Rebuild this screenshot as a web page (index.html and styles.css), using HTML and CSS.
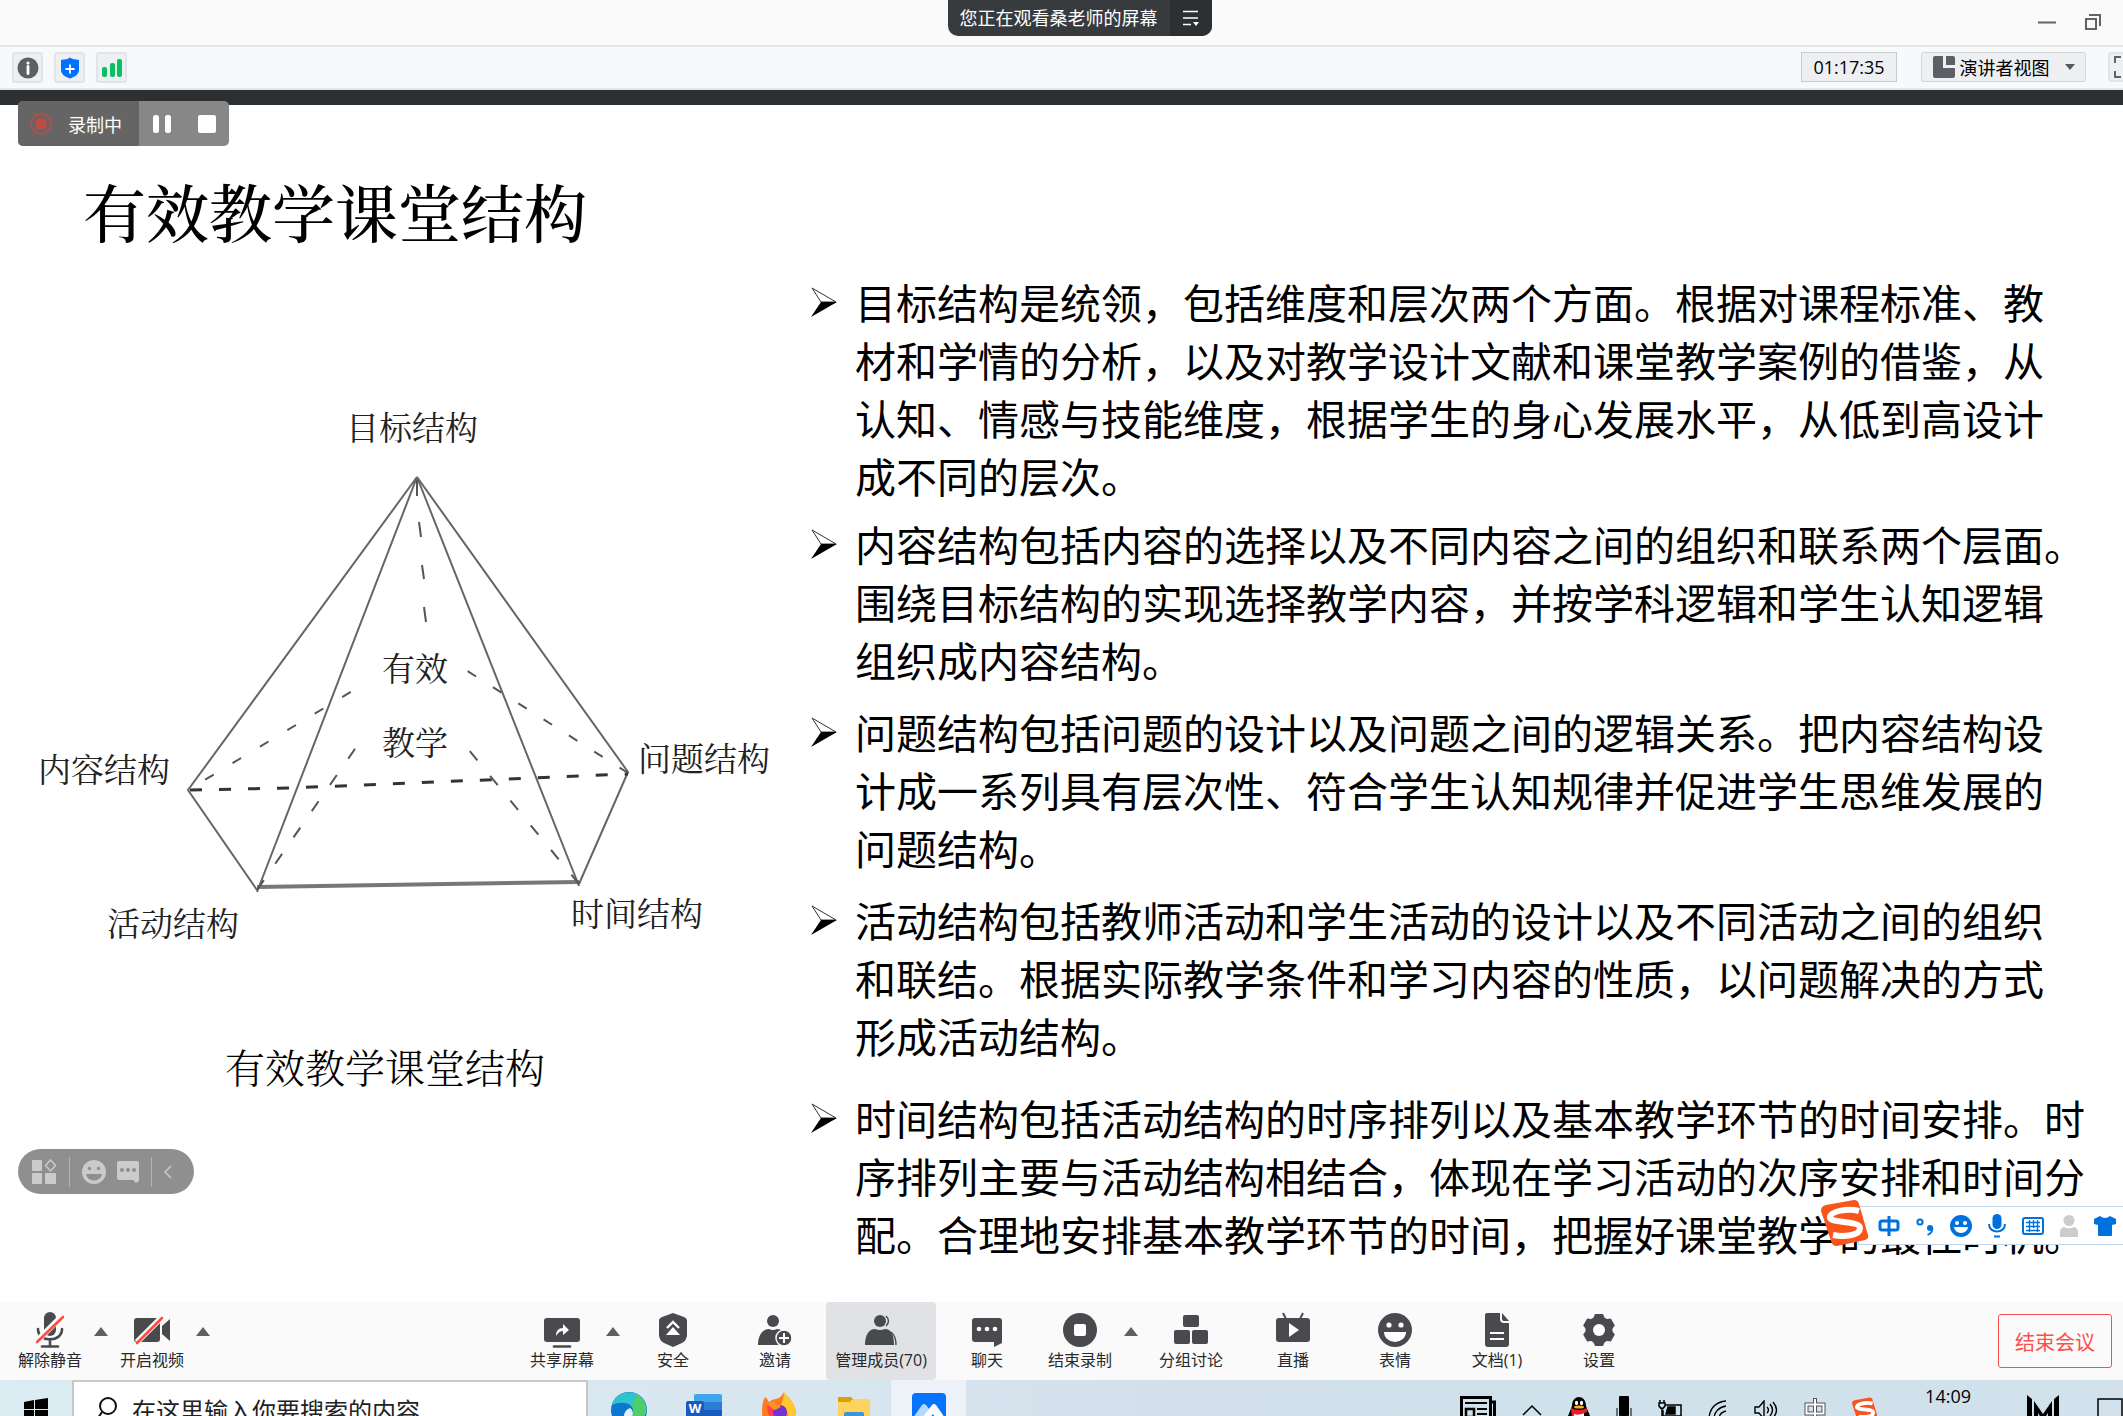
FILE: index.html
```html
<!doctype html>
<html lang="zh-CN">
<head>
  <meta charset="UTF-8">
  <title>有效教学课堂结构</title>
  <link rel="stylesheet" href="styles.css">
</head>
<body>

<header class="titlebar">
  <div class="share-tip">
    <span class="share-text">您正在观看桑老师的屏幕</span>
    <button class="share-menu" aria-label="菜单">
      <svg width="18" height="16" viewBox="0 0 18 16"><path d="M1 1.500h15M1 8h15M1 14.500h8" stroke="#fff" stroke-width="1.500"/><path d="M11 12h6l-3 4z" fill="#fff"/></svg>
    </button>
  </div>
  <div class="win-btns">
    <button aria-label="最小化"><svg width="20" height="20" viewBox="0 0 20 20"><path d="M1 10.500h18" stroke="#606468" stroke-width="2"/></svg></button>
    <button aria-label="还原"><svg width="16" height="16" viewBox="0 0 16 16" fill="none" stroke="#606468" stroke-width="2"><path d="M1 5h10v10H1z"/><path d="M4 1h11v11"/></svg></button>
  </div>
</header>

<div class="infobar">
  <div class="info-left">
    <button class="sq" aria-label="会议信息"><svg width="22" height="22" viewBox="0 0 22 22"><circle cx="11" cy="11" r="10.500" fill="#5c6064"/><circle cx="11" cy="6" r="1.600" fill="#fff"/><path d="M11 9.500v7" stroke="#fff" stroke-width="2.800" stroke-linecap="round"/></svg></button>
    <button class="sq" aria-label="安全"><svg width="20" height="22" viewBox="0 0 20 22"><path d="M10 0.500c2 1.500 5 2 9 2.500v10c0 4-4 7-9 8.500-5-1.500-9-4.500-9-8.500V3c4-.5 7-1 9-2.500z" fill="#0070ff"/><path d="M10 7.500v9M5.500 12h9" stroke="#fff" stroke-width="1.800"/></svg></button>
    <button class="sq" aria-label="网络"><svg width="22" height="20" viewBox="0 0 22 20" fill="#07c160"><rect x="1" y="9" width="5" height="10" rx="2"/><rect x="9" y="5" width="5" height="14" rx="2"/><rect x="16" y="1" width="5" height="18" rx="2"/></svg></button>
  </div>
  <div class="info-right">
    <span class="timer">01:17:35</span>
    <button class="view-btn">
      <svg width="22" height="22" viewBox="0 0 22 22" fill="#5c6064"><path d="M2 0h8v12h12v8a2 2 0 0 1-2 2H2a2 2 0 0 1-2-2V2a2 2 0 0 1 2-2z"/><path d="M13 0h7a2 2 0 0 1 2 2v7h-9z"/></svg>
      <span>演讲者视图</span>
      <i class="down"></i>
    </button>
    <button class="full" aria-label="全屏"><svg width="22" height="22" viewBox="0 0 22 22" fill="none" stroke="#606468" stroke-width="2"><path d="M1 7V1h6M15 1h6v6M21 15v6h-6M7 21H1v-6"/></svg></button>
  </div>
</div>

<main class="slide">
  <div class="record">
    <div class="rec-state">
      <svg width="22" height="22" viewBox="0 0 22 22"><circle cx="11" cy="11" r="10" fill="none" stroke="#c04a44" stroke-width="1.500"/><circle cx="11" cy="11" r="6" fill="#c04a44"/></svg>
      <span>录制中</span>
    </div>
    <button aria-label="暂停"><svg width="20" height="18" viewBox="0 0 20 18" fill="#fff"><rect x="1" width="6" height="18" rx="2.500"/><rect x="13" width="6" height="18" rx="2.500"/></svg></button>
    <button aria-label="停止"><svg width="18" height="18" viewBox="0 0 18 18"><rect width="18" height="18" rx="2" fill="#fff"/></svg></button>
  </div>

  <h1>有效教学课堂结构</h1>

  <div class="content">
    <figure>
      <svg class="pyramid" viewBox="0 380 780 580">
        <g class="line">
          <path d="M417 477L188 790L257 890M417 477L628 772L579 884"/>
          <path d="M417 477L257 892M417 477L579 886"/>
          <path class="thick" d="M257 887L579 882"/>
        </g>
        <g class="dash">
          <path d="M417 480v16M419 522l2 15M422 565l2 14M424 607l2 15"/>
          <path d="M188 790L364 684" stroke-dasharray="10 22" stroke-dashoffset="-20"/>
          <path d="M628 773L458 665" stroke-dasharray="10 20"/>
          <path class="base" d="M190 790L290 788L628 774" stroke-dasharray="12 17"/>
          <path d="M257 890L366 733" stroke-dasharray="12 20"/>
          <path d="M579 884L459 738" stroke-dasharray="12 20"/>
        </g>
        <g class="label">
          <text x="412" y="440">目标结构</text>
          <text x="415" y="681">有效</text>
          <text x="415" y="755">教学</text>
          <text x="104" y="782">内容结构</text>
          <text x="704" y="771">问题结构</text>
          <text x="173" y="936">活动结构</text>
          <text x="637" y="926">时间结构</text>
        </g>
      </svg>
      <figcaption>有效教学课堂结构</figcaption>
    </figure>

    <ul class="points">
      <li>
        <svg class="arrow" viewBox="0 0 26 30"><path d="M1 1l24 14H10z" fill="#fff" stroke="#333"/><path d="M0 30l10-15h16z"/></svg>
        <p>目标结构是统领，包括维度和层次两个方面。根据对课程标准、教<br>材和学情的分析，以及对教学设计文献和课堂教学案例的借鉴，从<br>认知、情感与技能维度，根据学生的身心发展水平，从低到高设计<br>成不同的层次。</p>
      </li>
      <li>
        <svg class="arrow" viewBox="0 0 26 30"><path d="M1 1l24 14H10z" fill="#fff" stroke="#333"/><path d="M0 30l10-15h16z"/></svg>
        <p>内容结构包括内容的选择以及不同内容之间的组织和联系两个层面。<br>围绕目标结构的实现选择教学内容，并按学科逻辑和学生认知逻辑<br>组织成内容结构。</p>
      </li>
      <li>
        <svg class="arrow" viewBox="0 0 26 30"><path d="M1 1l24 14H10z" fill="#fff" stroke="#333"/><path d="M0 30l10-15h16z"/></svg>
        <p>问题结构包括问题的设计以及问题之间的逻辑关系。把内容结构设<br>计成一系列具有层次性、符合学生认知规律并促进学生思维发展的<br>问题结构。</p>
      </li>
      <li>
        <svg class="arrow" viewBox="0 0 26 30"><path d="M1 1l24 14H10z" fill="#fff" stroke="#333"/><path d="M0 30l10-15h16z"/></svg>
        <p>活动结构包括教师活动和学生活动的设计以及不同活动之间的组织<br>和联结。根据实际教学条件和学习内容的性质，以问题解决的方式<br>形成活动结构。</p>
      </li>
      <li>
        <svg class="arrow" viewBox="0 0 26 30"><path d="M1 1l24 14H10z" fill="#fff" stroke="#333"/><path d="M0 30l10-15h16z"/></svg>
        <p>时间结构包括活动结构的时序排列以及基本教学环节的时间安排。时<br>序排列主要与活动结构相结合，体现在学习活动的次序安排和时间分<br>配。合理地安排基本教学环节的时间，把握好课堂教学的最佳时机。</p>
      </li>
    </ul>
  </div>

  <div class="float-pill">
    <button aria-label="应用"><svg width="26" height="26" viewBox="0 0 26 26" fill="#cbcbcb"><rect x="1" y="1" width="10" height="11" rx="1"/><rect x="1" y="14" width="10" height="11" rx="1"/><rect x="14" y="14" width="11" height="11" rx="1"/><path d="M19.500 1l5 5.500-5 5.500-5-5.500z" fill="none" stroke="#cbcbcb" stroke-width="1.500"/></svg></button>
    <span class="sep"></span>
    <button aria-label="表情"><svg width="24" height="24" viewBox="0 0 24 24"><circle cx="12" cy="12" r="12" fill="#cbcbcb"/><g fill="#8f8f8f"><circle cx="7.500" cy="8.500" r="1.700"/><circle cx="16.500" cy="8.500" r="1.700"/><path d="M4 14h16a8 6.500 0 0 1-16 0z"/></g></svg></button>
    <button aria-label="聊天"><svg width="22" height="22" viewBox="0 0 22 22"><path d="M2 0h18a2 2 0 0 1 2 2v18l-3 2-3-3H2a2 2 0 0 1-2-2V2a2 2 0 0 1 2-2z" fill="#cbcbcb"/><g fill="#8f8f8f"><circle cx="5" cy="9" r="2"/><circle cx="11" cy="9" r="2"/><circle cx="17" cy="9" r="2"/></g></svg></button>
    <span class="sep"></span>
    <button aria-label="收起"><svg width="8" height="14" viewBox="0 0 8 14"><path d="M7 1L1 7l6 6" fill="none" stroke="#cbcbcb" stroke-width="1.500"/></svg></button>
  </div>

  <div class="ime">
    <svg class="ime-logo" viewBox="0 0 48 46"><path d="M5 5L33 0q4 0 5 4l9 31q1 4-3 5L16 46q-5 0-6-5L0 11Q0 6 5 5z" fill="#f9541c"/><path d="M38 11C27 8 10 11 9 17c-1 7 30 3 30 11 0 8-17 9-27 7" fill="none" stroke="#fff" stroke-width="6"/></svg>
    <button aria-label="中文"><svg width="22" height="22" viewBox="0 0 22 22" fill="none" stroke="#0070dd" stroke-width="3"><rect x="2" y="6" width="18" height="9" rx="2"/><path d="M11 1v20"/></svg></button>
    <button aria-label="标点"><svg width="18" height="22" viewBox="0 0 18 22"><circle cx="4" cy="7" r="2.600" fill="none" stroke="#0070dd" stroke-width="2"/><circle cx="14" cy="13" r="3" fill="#0070dd"/><path d="M16.500 13q0 5-5 7" fill="none" stroke="#0070dd" stroke-width="1.800"/></svg></button>
    <button aria-label="表情"><svg width="22" height="22" viewBox="0 0 22 22"><circle cx="11" cy="11" r="11" fill="#0070dd"/><g fill="#fff"><circle cx="7" cy="8" r="2"/><circle cx="15" cy="8" r="2"/><path d="M4 12h14a7 6 0 0 1-14 0z"/></g></svg></button>
    <button aria-label="语音"><svg width="18" height="24" viewBox="0 0 18 24"><rect x="4.500" width="9" height="15" rx="4.500" fill="#0070dd"/><path d="M1 10c0 10 16 10 16 0M6 22.500h6" fill="none" stroke="#0070dd" stroke-width="2"/></svg></button>
    <button aria-label="键盘"><svg width="22" height="18" viewBox="0 0 22 18" fill="none" stroke="#0070dd" stroke-width="2"><rect x="1" y="1" width="20" height="16" rx="2"/><path d="M4 5.500h14M4 9.500h14M4 13.500h14M7.500 3v12M11.500 3v8M15.500 3v12" stroke-width="1.300"/></svg></button>
    <button aria-label="用户"><svg width="18" height="22" viewBox="0 0 18 22" fill="#ccc"><circle cx="9" cy="5.500" r="5.500"/><path d="M0 22v-5q0-4 4-5 5 2.500 10 0 4 1 4 5v5z"/></svg></button>
    <button aria-label="皮肤"><svg width="22" height="22" viewBox="0 0 22 22" fill="#0070dd"><path d="M6 1q5 4 10 0l6 3v5l-4 1v10q0 1-1 1H5q-1 0-1-1V10L0 9V4z"/></svg></button>
  </div>
</main>

<nav class="tools">
  <div class="group">
    <button class="tool split"><svg width="28" height="36" viewBox="0 0 28 36"><rect x="8" y="0" width="12" height="24" rx="6" fill="#484a4e"/><path d="M2 17c0 14 24 14 24 0M14 27v7M6 34.500h16" fill="none" stroke="#484a4e" stroke-width="2.600" stroke-linecap="round"/><path d="M1 29L26 4" stroke="#fafafa" stroke-width="6"/><path d="M1 30L27 5" stroke="#fe4b44" stroke-width="2.600" stroke-linecap="round"/></svg><span>解除静音</span></button>
    <button class="up" aria-label="音频选项"><i></i></button>
    <button class="tool split"><svg width="36" height="36" viewBox="0 0 36 36"><path d="M3 6h20a3 3 0 0 1 3 3v18a3 3 0 0 1-3 3H3a3 3 0 0 1-3-3V9a3 3 0 0 1 3-3zM28 14l8-7v22l-8-7z" fill="#484a4e"/><path d="M3 30L28 5" stroke="#fafafa" stroke-width="6"/><path d="M3 31L28 6" stroke="#fe4b44" stroke-width="2.600" stroke-linecap="round"/></svg><span>开启视频</span></button>
    <button class="up" aria-label="视频选项"><i></i></button>
  </div>

  <div class="group main">
    <button class="tool split"><svg width="36" height="36" viewBox="0 0 36 36"><rect y="6" width="36" height="24" rx="3" fill="#484a4e"/><path d="M10 34.500h16" stroke="#484a4e" stroke-width="2.600" stroke-linecap="round"/><path d="M12 24q0-8 7-8v-4l6 6-6 5v-4q-4 0-7 5z" fill="#fff"/></svg><span>共享屏幕</span></button>
    <button class="up" aria-label="共享选项"><i></i></button>
    <button class="tool"><svg width="28" height="36" viewBox="0 0 28 36"><path d="M14 1l11 4q3 1 3 4v14q0 5-5 8l-9 4-9-4q-5-3-5-8V9q0-3 3-4z" fill="#484a4e"/><path d="M8 16l6-6 6 6" fill="none" stroke="#fff" stroke-width="2.400"/><path d="M7 23l7-8 7 8z" fill="#fff"/></svg><span>安全</span></button>
    <button class="tool"><svg width="34" height="36" viewBox="0 0 34 36"><circle cx="15" cy="9" r="6" fill="#484a4e"/><path d="M0 33c0-10 5-16 11-16q4 2 8 0c6 0 9 6 9 16z" fill="#484a4e"/><circle cx="26" cy="26" r="8" fill="#484a4e" stroke="#fafafa" stroke-width="1.500"/><path d="M26 21v10M21 26h10" stroke="#fff" stroke-width="2"/></svg><span>邀请</span></button>
    <button class="tool active"><svg width="34" height="36" viewBox="0 0 34 36"><circle cx="16" cy="9" r="6" fill="#484a4e"/><path d="M1 33c0-10 4-16 10-16q5 2 10 0c6 0 9 6 9 16z" fill="#484a4e"/><path d="M22 4q5 5 0 10M27 20q5 4 5 13" fill="none" stroke="#484a4e" stroke-width="1.400"/></svg><span>管理成员(70)</span></button>
    <button class="tool"><svg width="30" height="36" viewBox="0 0 30 36"><path d="M3 6h24a3 3 0 0 1 3 3v22l-8 4v-5H3a3 3 0 0 1-3-3V9a3 3 0 0 1 3-3z" fill="#484a4e"/><g fill="#fff"><circle cx="7" cy="17" r="2.300"/><circle cx="15" cy="17" r="2.300"/><circle cx="23" cy="17" r="2.300"/></g></svg><span>聊天</span></button>
    <button class="tool split"><svg width="34" height="36" viewBox="0 0 34 36"><circle cx="17" cy="18" r="17" fill="#484a4e"/><rect x="11" y="12" width="12" height="12" rx="2" fill="#fff"/></svg><span>结束录制</span></button>
    <button class="up" aria-label="录制选项"><i></i></button>
    <button class="tool"><svg width="34" height="36" viewBox="0 0 34 36" fill="#484a4e"><rect x="9" y="3" width="16" height="12" rx="2"/><rect y="18" width="16" height="14" rx="2"/><rect x="18" y="18" width="16" height="14" rx="2"/></svg><span>分组讨论</span></button>
    <button class="tool"><svg width="34" height="36" viewBox="0 0 34 36"><rect y="6" width="34" height="24" rx="3" fill="#484a4e"/><path d="M7 1l3 6M27 1l-3 6" stroke="#484a4e" stroke-width="2"/><path d="M13 11l10 7-10 7z" fill="#fff"/></svg><span>直播</span></button>
    <button class="tool"><svg width="34" height="36" viewBox="0 0 34 36"><circle cx="17" cy="18" r="17" fill="#484a4e"/><g fill="#fff"><circle cx="11" cy="13" r="2.600"/><circle cx="23" cy="13" r="2.600"/><path d="M6 20h22a11 10 0 0 1-22 0z"/></g></svg><span>表情</span></button>
    <button class="tool"><svg width="26" height="36" viewBox="0 0 26 36"><path d="M3 1h13v6q0 4 4 4h5v21a3 3 0 0 1-3 3H4a3 3 0 0 1-3-3V3q0-2 2-2zM18 1l7 8h-5q-2 0-2-2z" fill="#484a4e"/><path d="M6 21h14M6 27h14" stroke="#fff" stroke-width="2"/></svg><span>文档(1)</span></button>
    <button class="tool"><svg width="34" height="36" viewBox="0 0 34 36"><g fill="#484a4e"><circle cx="17" cy="18" r="13.500"/><path d="M13 2h8l2 5H11zM13 34h8l2-5H11z"/><path d="M13 2h8l2 5H11zM13 34h8l2-5H11z" transform="rotate(60 17 18)"/><path d="M13 2h8l2 5H11zM13 34h8l2-5H11z" transform="rotate(120 17 18)"/></g><circle cx="17" cy="18" r="6" fill="#fff"/></svg><span>设置</span></button>
  </div>

  <button class="end">结束会议</button>
</nav>

<footer class="taskbar">
  <div class="task-row">
    <button class="start" aria-label="开始"><svg width="24" height="24" viewBox="0 0 24 24"><path d="M0 4l10-2v9H0zM11 2l13-2v11H11zM0 12h10v9L0 20zM11 12h13v12l-13-2z"/></svg></button>
    <label class="search">
      <svg width="22" height="26" viewBox="0 0 22 26" fill="none" stroke="#111" stroke-width="2"><circle cx="13" cy="9" r="8"/><path d="M7 15L1 24"/></svg>
      <input type="text" placeholder="在这里输入你要搜索的内容" aria-label="搜索">
    </label>
    <div class="apps">
      <button aria-label="Edge"><svg width="36" height="36" viewBox="0 0 36 36"><circle cx="18" cy="18" r="18" fill="#0b77cf"/><path d="M1 13C5-3 30-5 35 14c3 12-9 16-14 10 5-10-6-17-20-11z" fill="#2fc3cf"/><path d="M25 2c9 4 14 18 7 23-4 3-9 2-11-1 3-3 2-7 0-9z" fill="#4fcf6b"/><path d="M15 36c-4-8-3-18 4-20 4 3 3 6 2 9 1 4 8 5 11 4-4 6-11 8-17 7z" fill="#e3f0f6"/></svg></button>
      <button aria-label="Word"><svg width="36" height="32" viewBox="0 0 36 32"><path d="M10 0h24q2 0 2 2v6H8V2q0-2 2-2z" fill="#41a5ee"/><path d="M8 8h28v8H8z" fill="#2b7cd3"/><path d="M8 16h28v8H8z" fill="#185abd"/><path d="M8 24h28v6q0 2-2 2H10q-2 0-2-2z" fill="#103f91"/><rect y="7" width="18" height="18" rx="2" fill="#185abd"/><text x="9" y="19" class="word-w">W</text></svg></button>
      <button aria-label="Firefox"><svg width="34" height="36" viewBox="0 0 34 36"><path d="M3 5q3 2 4 5 3-3 7-3 5-1 8-7c2 4 8 7 11 16 3 12-6 20-16 20S-1 30 0 18Q0 10 3 5z" fill="#ff7b26"/><path d="M22 0c2 4 8 7 11 16 2 9-3 16-9 18 4-8 3-17-5-21q3-7 3-13z" fill="#ffc831"/><path d="M6 12l10-1 3 4-7 5 2 8q-11-3-8-16z" fill="#ff3f4d"/><circle cx="18" cy="20" r="7" fill="#6c35d0"/><path d="M5 12q6-5 14 2-2 3-7 4z" fill="#ff8e25"/></svg></button>
      <button aria-label="文件资源管理器"><svg width="34" height="28" viewBox="0 0 34 28"><path d="M1 1h13l3 3h-3v4H1z" fill="#dda006"/><path d="M1 6h12l3-3h17v24H1z" fill="#ffd45e"/><path d="M9 16h16q2 0 2 2v10H7V18q0-2 2-2z" fill="#3d92d8"/></svg></button>
      <button class="on" aria-label="腾讯会议"><svg width="34" height="34" viewBox="0 0 34 34"><rect width="34" height="34" rx="4" fill="#0673ff"/><path d="M3 22l7-10q2-2 4 0l4 5-7 8H5q-4 0-2-3z" fill="#b4d8ff"/><path d="M11 24l9-12q2-2 4 0l7 10q2 4-2 4h-5l-3-5-4 5h-6l-2-4z" fill="#fff"/></svg></button>
    </div>
    <div class="tray">
      <svg width="36" height="28" viewBox="0 0 36 28" fill="none" stroke="#000" stroke-width="3"><path d="M1.500 1.500h29v25h-29zM31 6h3.500v20H30"/><path d="M5 7h22M17 13h10M17 18h10M17 23h10" stroke-width="2"/><path d="M6 13h8v8H6z" stroke-width="2.500"/></svg>
      <svg width="20" height="12" viewBox="0 0 20 12"><path d="M1 11l9-9 9 9" fill="none" stroke="#000" stroke-width="1.500"/></svg>
      <svg width="22" height="26" viewBox="0 0 22 26"><path d="M4 9c0-12 14-12 14 0l4 10-3 2-3 5H6l-3-5-3-2z"/><path d="M6 15h10v10H6z" fill="#fff"/><path d="M3 11q8 4 16 0v4q-8 4-13 2v5H4z" fill="#ee1c25"/><ellipse cx="8.500" cy="6" rx="1.600" ry="2.200" fill="#fff"/><ellipse cx="13.500" cy="6" rx="1.600" ry="2.200" fill="#fff"/><ellipse cx="11" cy="10" rx="5" ry="1.500" fill="#f8b01c"/></svg>
      <svg width="16" height="28" viewBox="0 0 16 28"><rect x="3" width="10" height="20" rx="1"/><path d="M1 12v9q0 3 7 3t7-3v-9" fill="none" stroke="#000"/></svg>
      <svg width="24" height="20" viewBox="0 0 24 20" fill="none" stroke="#000" stroke-width="1.500"><path d="M7 5h16v11H5v-6"/><path d="M10 7h7v7h-9z" fill="#000"/><path d="M1 3h6v3q-3 5-6 0zM2 0v3M6 0v3M4 8v8"/></svg>
      <svg width="20" height="20" viewBox="0 0 20 20" fill="none" stroke="#000" stroke-width="1.300"><path d="M1 18C2 8 8 2 18 1M6 19C6 12 11 7 18 6M11 19c0-4 3-7 7-8"/></svg>
      <svg width="24" height="20" viewBox="0 0 24 20" fill="none" stroke="#000" stroke-width="1.400"><path d="M1 7h4l5-6v18l-5-6H1zM13 7q3 3 0 6M16 4q5 6 0 12M19 2q7 8 0 16"/></svg>
      <svg width="22" height="24" viewBox="0 0 22 24" fill="none"><path d="M2.500 6.500h17v9h-17zM11 0v24" stroke="#555" stroke-width="4"/><path d="M2.500 6.500h17v9h-17zM11 1v22" stroke="#fff" stroke-width="2"/></svg>
      <svg width="26" height="26" viewBox="0 0 48 46"><path d="M5 5L33 0q4 0 5 4l9 31q1 4-3 5L16 46q-5 0-6-5L0 11Q0 6 5 5z" fill="#f9541c"/><path d="M38 11C27 8 10 11 9 17c-1 7 30 3 30 11 0 8-17 9-27 7" fill="none" stroke="#fff" stroke-width="7"/></svg>
      <time class="clock">14:09</time>
      <svg class="brand" width="32" height="30" viewBox="0 0 32 30"><path d="M0 0l5 4v26H0zM32 0l-5 4v26h5zM7 6l9 13 9-13v24h-4V18l-5 8-5-8v12H7z"/></svg>
      <svg width="26" height="24" viewBox="0 0 26 24"><path d="M1 1h24v20h-7l-4 4v-4H1z" fill="none" stroke="#000" stroke-width="1.500"/></svg>
    </div>
  </div>
</footer>

</body>
</html>
```
FILE: styles.css
```css
* {
  box-sizing: border-box;
}

body {
  margin: 0;
  height: 100vh;
  overflow: hidden;
  display: flex;
  flex-direction: column;
  background: #fff;
  color: #000;
  font-family: "Open Sans", "Noto Sans CJK SC", sans-serif;
  font-size: 18px;
}

button {
  margin: 0;
  padding: 0;
  border: 0;
  background: none;
  font: inherit;
  color: inherit;
  cursor: pointer;
  display: flex;
  align-items: center;
  justify-content: center;
}

svg {
  display: block;
  flex: none;
}

/* title bar */
.titlebar {
  position: relative;
  height: 47px;
  background: #fafafa;
  border-bottom: 2px solid #e4e4e4;
  display: flex;
  justify-content: center;
}

.share-tip {
  display: flex;
  height: 36px;
  margin-left: 36px;
  border-radius: 0 0 10px 10px;
  overflow: hidden;
  background: #373b3e;
  color: #fff;
}

.share-text {
  padding: 0 12px;
  line-height: 36px;
}

.share-menu {
  width: 42px;
  background: #2c3033;
}

.win-btns {
  position: absolute;
  right: 22px;
  top: 12px;
  display: flex;
  gap: 28px;
}

/* info bar */
.infobar {
  height: 58px;
  background: #f8f9fb;
  border-bottom: 15px solid #2c3033;
  box-shadow: inset 0 -2px #e2e7e6;
  padding: 5px 0 0 12px;
  display: flex;
  justify-content: space-between;
  align-items: flex-start;
}

.info-left {
  display: flex;
  gap: 11px;
}

.sq {
  width: 31px;
  height: 31px;
  background: #eeeff3;
  border: 2px solid #e2e4e7;
  border-radius: 3px;
}

.info-right {
  display: flex;
}

.timer {
  width: 96px;
  height: 30px;
  line-height: 28px;
  text-align: center;
  background: #eeeff3;
  border: 1px solid #c9cacd;
}

.view-btn {
  width: 165px;
  height: 30px;
  margin: 0 22px 0 24px;
  gap: 5px;
  background: #eeeff3;
  border: 1px solid #d5d6d9;
  border-radius: 2px;
}

.down {
  margin-left: 10px;
  border: 5px solid transparent;
  border-top: 6px solid #55595c;
  border-bottom: 0;
}

.full {
  width: 15px;
  height: 30px;
  overflow: hidden;
  justify-content: flex-start;
  padding-left: 4px;
  background: #eeeff3;
  border: 2px solid #e2e4e7;
  border-right: 0;
  border-radius: 4px 0 0 4px;
}

/* shared slide */
.slide {
  position: relative;
  flex: 1;
  min-height: 0;
  background: #fff;
}

.record {
  position: absolute;
  left: 18px;
  top: -4px;
  height: 45px;
  display: flex;
  border-radius: 5px;
  overflow: hidden;
  background: #878787;
  color: #fff;
}

.rec-state {
  width: 121px;
  padding-left: 12px;
  display: flex;
  align-items: center;
  gap: 16px;
  background: #656565;
}

.record button {
  width: 45px;
}

h1 {
  margin: 0;
  padding: 60px 0 0 83px;
  font-size: 63px;
  line-height: 90px;
  font-weight: 500;
  font-family: SimSun, "Noto Serif CJK SC", "Noto Sans CJK SC", serif;
}

.content {
  display: grid;
  grid-template-columns: minmax(0, 780px) 1fr;
}

figure {
  margin: 0;
  padding-top: 125px;
}

.pyramid {
  width: 100%;
}

.line {
  fill: none;
  stroke: #666;
  stroke-width: 2;
}

.thick {
  stroke: #777;
  stroke-width: 4;
}

.dash {
  fill: none;
  stroke: #555;
  stroke-width: 2;
}

.base {
  stroke: #333;
  stroke-width: 3;
}

.label {
  font-family: SimSun, "Noto Serif CJK SC", "Noto Sans CJK SC", serif;
  font-size: 33px;
  fill: #222;
  text-anchor: middle;
}

figcaption {
  margin-top: 76px;
  padding-right: 10px;
  text-align: center;
  font-family: SimSun, "Noto Serif CJK SC", "Noto Sans CJK SC", serif;
  font-size: 40px;
  font-weight: 300;
  line-height: 60px;
}

.points {
  margin: 0;
  padding: 17px 0 0 31px;
  list-style: none;
}

.points li {
  display: flex;
  gap: 18px;
  margin-bottom: 14px;
}

.points li:first-child {
  margin-bottom: 10px;
}

.points li:nth-child(4) {
  margin-bottom: 24px;
}

.points p {
  margin: 0;
  font-family: "Noto Sans CJK SC", sans-serif;
  font-size: 41px;
  line-height: 58px;
  white-space: nowrap;
}

.arrow {
  width: 26px;
  height: 30px;
  margin-top: 15px;
}

.float-pill {
  position: absolute;
  left: 18px;
  bottom: 108px;
  height: 45px;
  width: 176px;
  padding: 0 22px 0 13px;
  border-radius: 23px;
  background: #8f8f8f;
  display: flex;
  align-items: center;
  justify-content: space-between;
}

.sep {
  width: 1px;
  height: 30px;
  background: #b5b5b5;
}

.ime {
  position: absolute;
  right: 0;
  bottom: 57px;
  height: 39px;
  padding-left: 12px;
  display: flex;
  background: #fff;
  border: 1px solid #c3d3e8;
  border-right: 0;
}

.ime button {
  width: 36px;
}

.ime-logo {
  position: absolute;
  left: -38px;
  top: -7px;
  width: 48px;
  height: 46px;
}

/* meeting tools */
.tools {
  height: 78px;
  flex: none;
  padding: 0 11px 0 8px;
  background: #fafafa;
  display: flex;
  justify-content: space-between;
  align-items: center;
}

.group {
  display: flex;
}

.main {
  margin-right: 40px;
}

.tool {
  width: 102px;
  height: 78px;
  flex-direction: column;
  justify-content: flex-start;
  padding-top: 10px;
  color: #27292c;
  font-size: 16px;
  line-height: 24px;
}

.split {
  width: 84px;
}

.active {
  width: 110px;
  background: #e1e2e6;
  border-radius: 4px;
}

.up {
  width: 18px;
  height: 58px;
}

.up i {
  border: 7px solid transparent;
  border-bottom: 9px solid #5c6064;
  border-top: 0;
}

.end {
  width: 114px;
  height: 54px;
  border: 1px solid #fb4f4f;
  border-radius: 3px;
  color: #fb4f4f;
  font-size: 20px;
}

/* windows task bar, its lower part runs off the screen */
.taskbar {
  height: 36px;
  flex: none;
  overflow: hidden;
  background: linear-gradient(90deg, #dcecf3, #d8e6ef 40%, #d3dfeb 55%, #cfe1ea 70%, #d2e1ec);
}

.task-row {
  height: 60px;
  display: flex;
}

.start {
  width: 72px;
}

.search {
  width: 516px;
  padding-left: 21px;
  display: flex;
  align-items: center;
  gap: 15px;
  background: #fff;
  border: 2px solid #c8c8c8;
}

.search input {
  flex: 1;
  min-width: 0;
  border: 0;
  padding: 0;
  background: none;
  font-family: inherit;
  font-size: 24px;
}

.search input::placeholder {
  color: #222;
  opacity: 1;
}

.apps {
  display: flex;
  padding-left: 3px;
}

.apps button {
  width: 75px;
}

.apps .on {
  background: #ecf2f8;
}

.word-w {
  font-family: "Open Sans", sans-serif;
  font-size: 13px;
  font-weight: 700;
  fill: #fff;
  text-anchor: middle;
}

.tray {
  margin-left: auto;
  display: flex;
  align-items: center;
  gap: 26px;
}

.clock {
  align-self: flex-start;
  padding: 4px 30px 0 21px;
  line-height: 24px;
}

.brand {
  margin-right: 12px;
}
```
